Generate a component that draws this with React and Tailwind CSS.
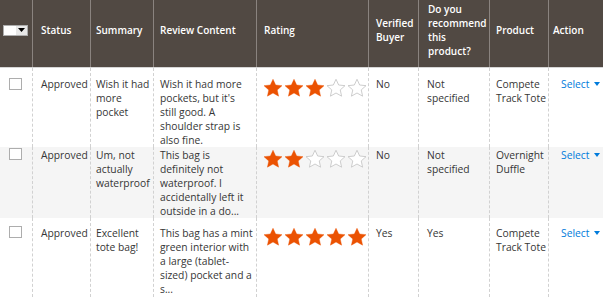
import React from "react";

const cols = "grid grid-cols-[32px_58px_63px_103px_112px_50px_71px_59px_55px]";

function Star({ filled }) {
  return (
    <svg width="20" height="20" viewBox="0 0 24 24" className="block">
      <polygon
        points="12,1.5 15.2,8.4 22.8,9.2 17.1,14.3 18.7,21.8 12,18 5.3,21.8 6.9,14.3 1.2,9.2 8.8,8.4"
        fill={filled ? "#eb5202" : "#ffffff"}
        stroke={filled ? "#eb5202" : "#c8c8c8"}
        strokeWidth={filled ? 0.5 : 1.1}
        strokeLinejoin="miter"
      />
    </svg>
  );
}

function Lines({ lines }) {
  return (
    <div>
      {lines.map((l, i) => (
        <div key={i} className="whitespace-nowrap">
          {l}
        </div>
      ))}
    </div>
  );
}

const rows = [
  {
    bg: "bg-white",
    h: "h-[79px]",
    pt: "pt-[9px]",
    summary: ["Wish it had", "more", "pocket"],
    content: ["Wish it had more", "pockets, but it's", "still good. A", "shoulder strap is", "also fine."],
    rating: 3,
    verified: "No",
    rec: ["Not", "specified"],
    product: ["Compete", "Track Tote"],
  },
  {
    bg: "bg-[#f5f5f5]",
    h: "h-[71px]",
    pt: "pt-[1px]",
    summary: ["Um, not", "actually", "waterproof"],
    content: ["This bag is", "definitely not", "waterproof. I", "accidentally left it", "outside in a do..."],
    rating: 2,
    verified: "No",
    rec: ["Not", "specified"],
    product: ["Overnight", "Duffle"],
  },
  {
    bg: "bg-white",
    h: "h-[79px]",
    pt: "pt-[8px]",
    summary: ["Excellent", "tote bag!"],
    content: ["This bag has a mint", "green interior with", "a large (tablet-", "sized) pocket and a", "s..."],
    rating: 5,
    verified: "Yes",
    rec: ["Yes"],
    product: ["Compete", "Track Tote"],
  },
];

export default function App() {
  const hcell = "flex items-center h-[67px] pb-[7px] border-l border-[#8a837f]";
  const bcell = "border-l border-dashed border-[#d1d1d1]";
  return (
    <div
      className="w-[603px] h-[297px] overflow-hidden bg-white text-[10.3px] leading-[14px] text-[#363636]"
      style={{ fontFamily: '"Open Sans", "Liberation Sans", sans-serif' }}
    >
      <div className={`${cols} bg-[#514943] text-white text-[10px] font-semibold border-b border-[#d6d6d6]`}>
        <div className="flex items-center h-[67px] pb-[7px] pl-[3px]">
          <div className="flex w-[25px] h-[11px] border border-[#adadad] bg-[#e8e8e8]">
            <div className="w-[12px] h-full bg-white" />
            <div className="flex-1 flex items-center justify-center">
              <svg width="7" height="4" viewBox="0 0 7 4">
                <polygon points="0,0 7,0 3.5,4" fill="#000" />
              </svg>
            </div>
          </div>
        </div>
        <div className={`${hcell} pl-[8px]`}>Status</div>
        <div className={`${hcell} pl-[5px]`}>Summary</div>
        <div className={`${hcell} pl-[6px]`}>Review Content</div>
        <div className={`${hcell} pl-[7px]`}>Rating</div>
        <div className={`${hcell} pl-[7px]`}>
          <Lines lines={["Verified", "Buyer"]} />
        </div>
        <div className={`${hcell} pl-[9px]`}>
          <Lines lines={["Do you", "recommend", "this", "product?"]} />
        </div>
        <div className={`${hcell} pl-[6px]`}>Product</div>
        <div className={`${hcell} pl-[4px]`}>Action</div>
      </div>
      {rows.map((r, i) => (
        <div key={i} className={`${cols} ${r.bg} ${r.h}`}>
          <div className={`${r.pt} pl-[9px]`}>
            <div className={`w-[13px] h-[12px] border border-[#adadad] bg-white ${i === 0 ? "mt-[1px]" : "mt-[0px]"}`} />
          </div>
          <div className={`${bcell} ${r.pt} pl-[8px]`}>Approved</div>
          <div className={`${bcell} ${r.pt} pl-[5px]`}>
            <Lines lines={r.summary} />
          </div>
          <div className={`${bcell} ${r.pt} pl-[6px]`}>
            <Lines lines={r.content} />
          </div>
          <div className={`${bcell} ${r.pt} pl-[6px]`}>
            <div className="flex gap-[1px] mt-[1px]">
              {[0, 1, 2, 3, 4].map((k) => (
                <Star key={k} filled={k < r.rating} />
              ))}
            </div>
          </div>
          <div className={`${bcell} ${r.pt} pl-[7px]`}>{r.verified}</div>
          <div className={`${bcell} ${r.pt} pl-[8px]`}>
            <Lines lines={r.rec} />
          </div>
          <div className={`${bcell} ${r.pt} pl-[6px]`}>
            <Lines lines={r.product} />
          </div>
          <div className={`${bcell} ${r.pt} pl-[12px]`}>
            <div className="flex items-center text-[#007bdb]">
              <span>Select</span>
              <svg width="6" height="4" viewBox="0 0 6 4" className="ml-[5px]">
                <polygon points="0,0 6,0 3,4" fill="#007bdb" />
              </svg>
            </div>
          </div>
        </div>
      ))}
    </div>
  );
}
